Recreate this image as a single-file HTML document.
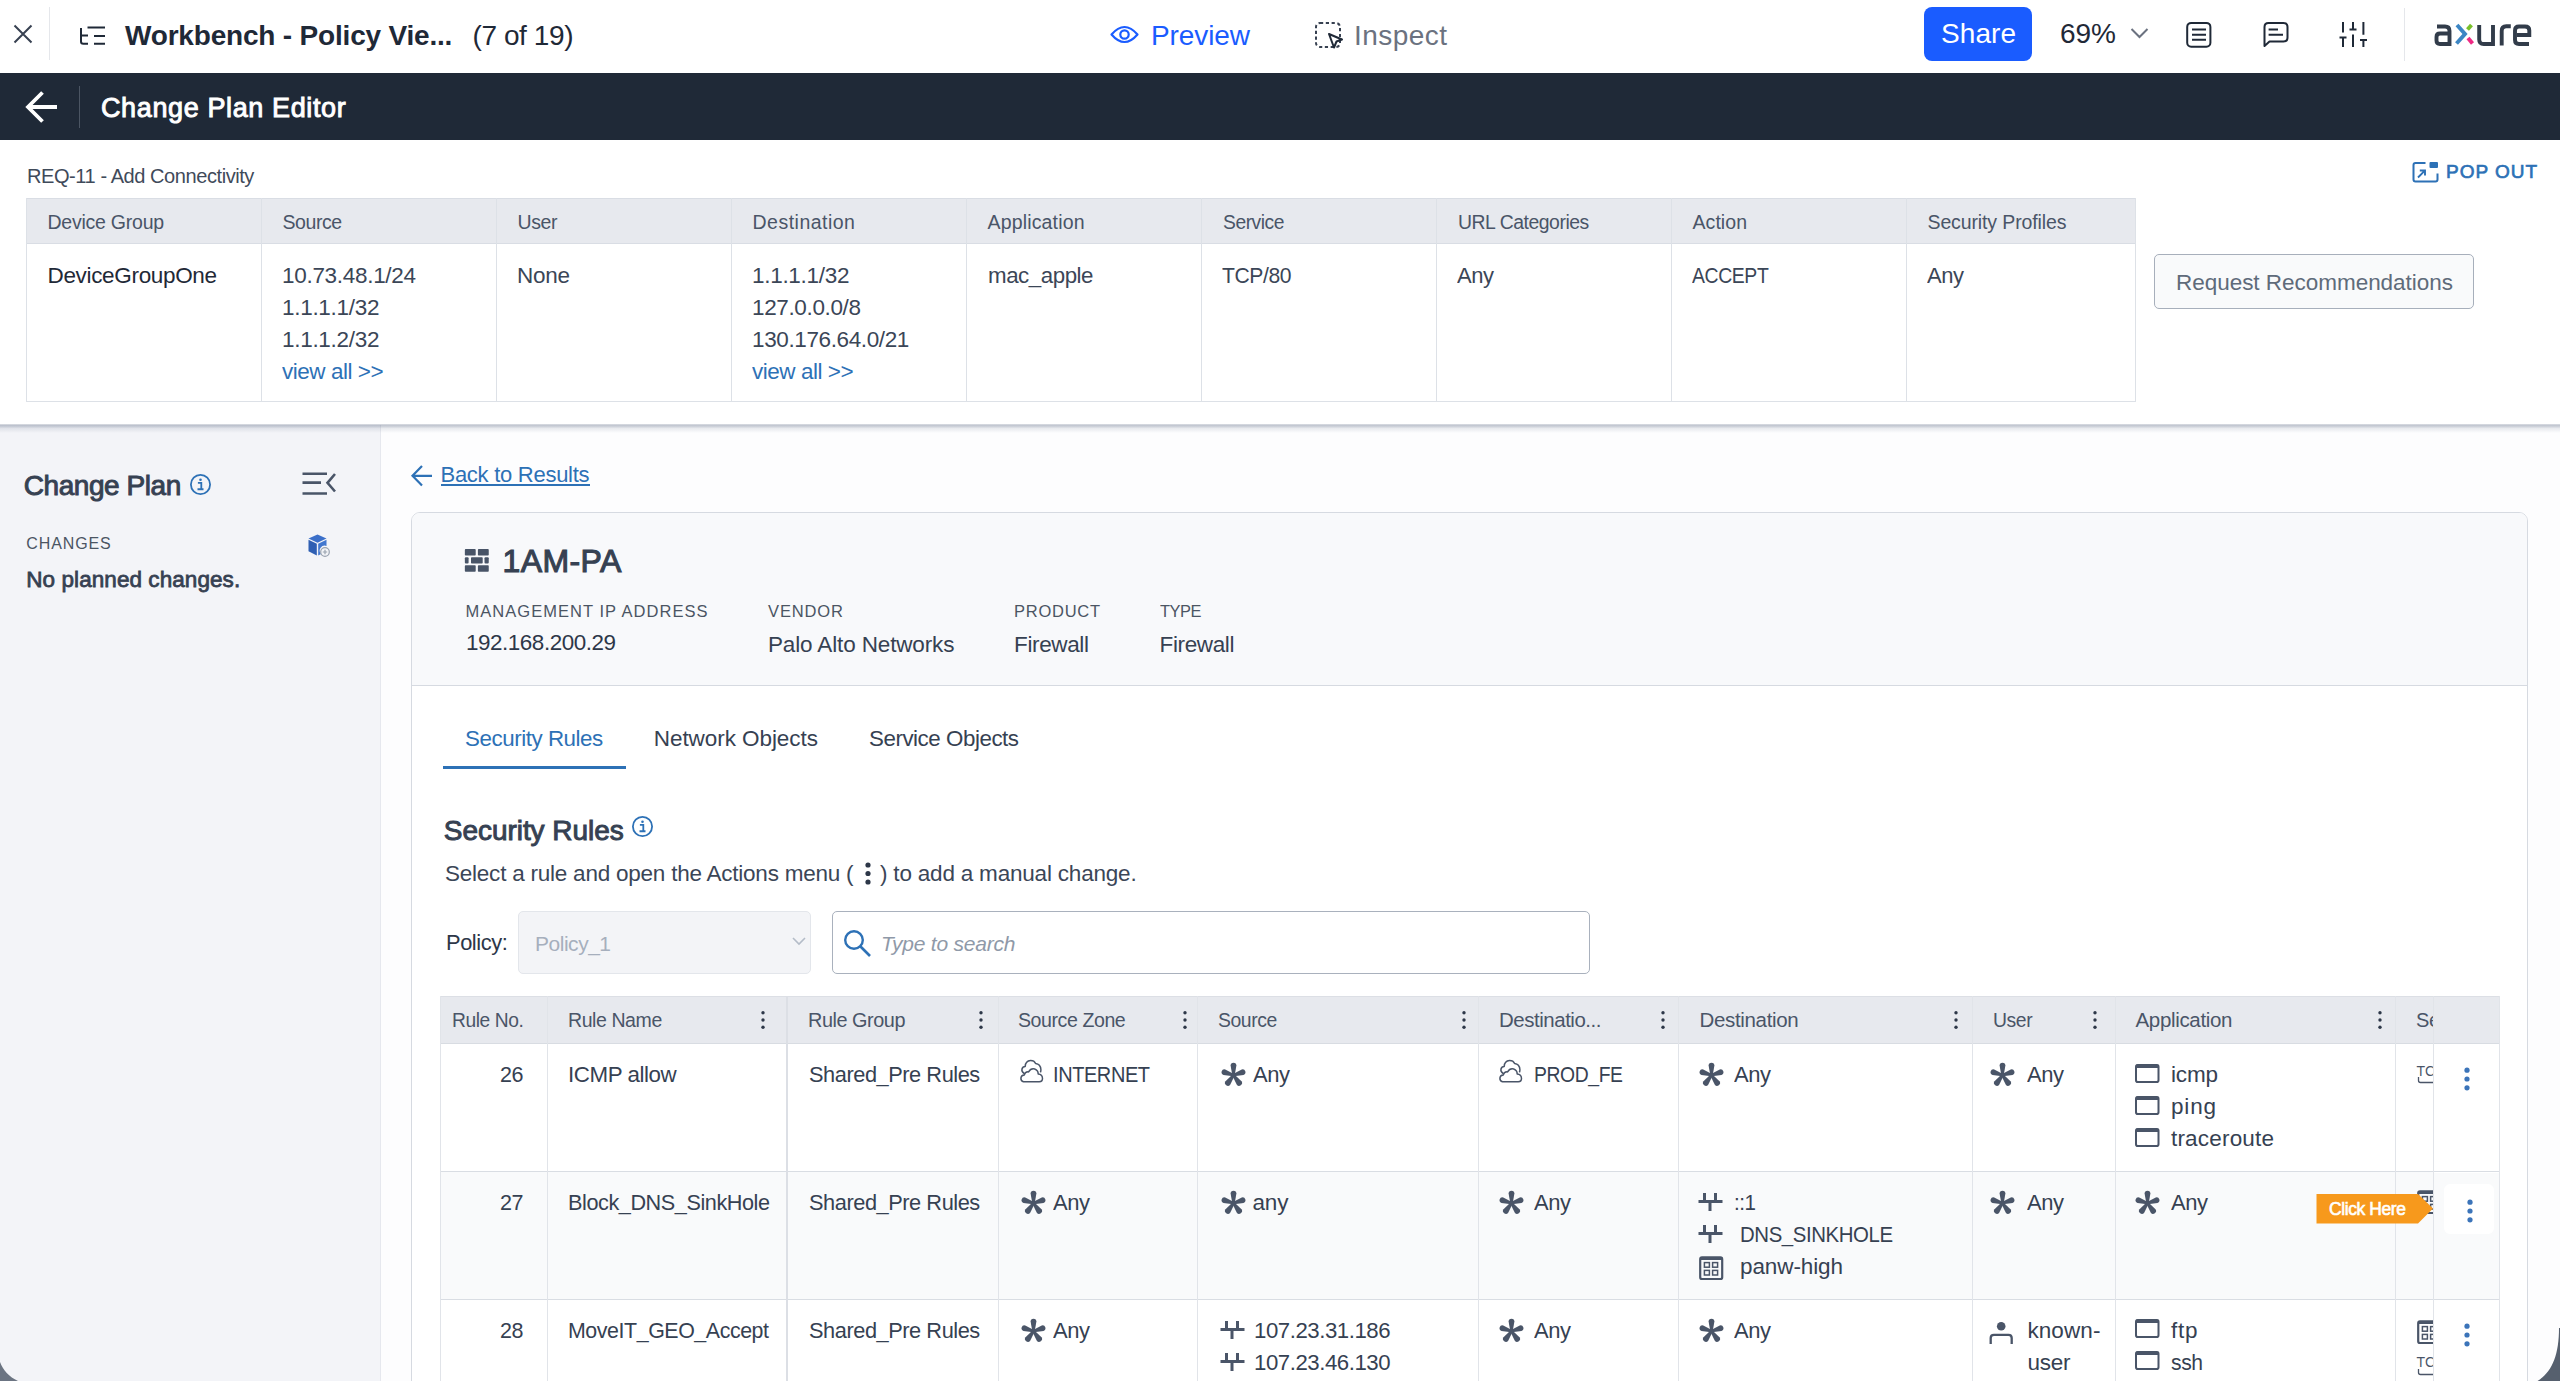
<!DOCTYPE html>
<html><head><meta charset="utf-8"><title>Change Plan Editor</title>
<style>
html,body{margin:0;padding:0;width:2560px;height:1381px;overflow:hidden;background:#fff;}
body{position:relative;font-family:"Liberation Sans", sans-serif;}
.a{position:absolute;}
.t{white-space:pre;line-height:normal;}
</style></head><body>
<div class="a" style="left:0px;top:0px;width:2560px;height:73px;background:#ffffff;"></div>
<div class="a" style="left:0px;top:73px;width:2560px;height:67px;background:#1f2937;"></div>
<div class="a" style="left:0px;top:140px;width:2560px;height:285px;background:#ffffff;"></div>
<div class="a" style="left:381px;top:425px;width:2179px;height:956px;background:#fdfdfe;"></div>
<div class="a" style="left:0px;top:425px;width:380px;height:956px;background:#f3f4f8;"></div>
<div class="a" style="left:380px;top:425px;width:1px;height:956px;background:#e6e8ee;"></div>
<div class="a" style="left:0px;top:424px;width:2560px;height:9px;background:linear-gradient(to bottom, rgba(110,122,145,0.25) 0%, rgba(110,122,145,0.42) 18%, rgba(110,122,145,0.14) 50%, rgba(110,122,145,0) 100%);"></div>
<svg class="a" style="left:10px;top:21px;" width="26" height="26" viewBox="0 0 26 26"><path d="M4.5 4.5 L21.5 21.5 M21.5 4.5 L4.5 21.5" stroke="#374151" stroke-width="2" fill="none"/></svg>
<div class="a" style="left:49px;top:7px;width:1px;height:53px;background:#e5e7eb;"></div>
<svg class="a" style="left:78px;top:24px;" width="30" height="24" viewBox="0 0 30 24"><path d="M3 4 V17.5 Q3 19.8 5.3 19.8 H10 M3 11.6 H10 M9.5 3.5 H27 M16 12 H27 M16 19.8 H27" stroke="#1f2937" stroke-width="2" fill="none"/></svg>
<div class="a t" style="left:125px;top:20px;font-size:28.00px;color:#1f2937;font-weight:700;letter-spacing:-0.19px;">Workbench - Policy Vie...</div>
<div class="a t" style="left:472.5px;top:20px;font-size:28.00px;color:#1f2937;letter-spacing:-0.41px;">(7 of 19)</div>
<svg class="a" style="left:1108px;top:21px;" width="34" height="27" viewBox="0 0 34 27"><path d="M3.5 13.5 Q16.5 -1.5 29.5 13.5 Q16.5 28.5 3.5 13.5 Z" stroke="#1a5cff" stroke-width="2.2" fill="none" stroke-linejoin="round"/><circle cx="16.5" cy="13.5" r="4.2" stroke="#1a5cff" stroke-width="2.2" fill="none"/></svg>
<div class="a t" style="left:1151px;top:20px;font-size:28.00px;color:#1a5cff;letter-spacing:-0.10px;">Preview</div>
<svg class="a" style="left:1312px;top:19px;" width="34" height="32" viewBox="0 0 34 32"><rect x="4" y="4" width="24" height="24" rx="4" stroke="#374151" stroke-width="2" fill="none" stroke-dasharray="3.2 2.6"/><path d="M17 15 L30 20.5 L24.5 22.5 L22 28.5 Z" fill="#ffffff" stroke="#1f2937" stroke-width="2" stroke-linejoin="round"/></svg>
<div class="a t" style="left:1354px;top:20px;font-size:28.00px;color:#6b7280;letter-spacing:0.45px;">Inspect</div>
<div class="a" style="left:1924px;top:7px;width:108px;height:54px;background:#1a5cff;border-radius:8px;"></div>
<div class="a t" style="left:1941px;top:18px;font-size:28.00px;color:#ffffff;letter-spacing:0.07px;">Share</div>
<div class="a t" style="left:2060px;top:18px;font-size:28.00px;color:#1f2937;letter-spacing:-0.02px;">69%</div>
<svg class="a" style="left:2128px;top:25px;" width="24" height="16" viewBox="0 0 24 16"><path d="M3.5 4 L11.5 12 L19.5 4" stroke="#6b7280" stroke-width="2" fill="none"/></svg>
<svg class="a" style="left:2184px;top:20px;" width="30" height="30" viewBox="0 0 30 30"><rect x="3.2" y="2.9" width="23.2" height="23.8" rx="4" stroke="#1f2937" stroke-width="2" fill="none"/><path d="M8 9.5 H22 M8 14.7 H22 M8 19.8 H22" stroke="#1f2937" stroke-width="1.9"/></svg>
<svg class="a" style="left:2260px;top:20px;" width="32" height="30" viewBox="0 0 32 30"><path d="M4.5 26 V7 Q4.5 3 8.5 3 H23.5 Q27.5 3 27.5 7 V17.5 Q27.5 21.5 23.5 21.5 H9.5 Z" stroke="#1f2937" stroke-width="2" fill="none" stroke-linejoin="round"/><path d="M8.6 9.5 H18 M8.6 14.7 H23" stroke="#1f2937" stroke-width="1.9"/></svg>
<svg class="a" style="left:2336px;top:20px;" width="34" height="30" viewBox="0 0 34 30"><path d="M7 2 V12.5 M7 17.4 V27 M3.5 17.4 H10.5 M17 2 V9.5 M13.5 9.5 H20.5 M17 14.6 V27 M27.4 2 V14.8 M27.4 20 V27 M24 20 H31" stroke="#1f2937" stroke-width="2" fill="none"/></svg>
<div class="a" style="left:2404px;top:8px;width:1px;height:53px;background:#e5e7eb;"></div>
<svg class="a" style="left:2420px;top:10px;" width="130" height="50" viewBox="0 0 130 50"><g fill="none" stroke-width="3.9" stroke-linecap="butt">
<path d="M17 16.5 H25 Q29.5 16.5 29.5 21 V34 H20 Q16.5 34 16.5 30.5 V27 Q16.5 23.5 20 23.5 H29.5" stroke="#323c4a"/>
<path d="M37 15 L45 24 L36.5 33.5" stroke="#3c86c4"/>
<path d="M51.5 15 L47.5 19.5" stroke="#79c02a"/>
<path d="M48 28 L52.5 33.5" stroke="#ee2a84"/>
<path d="M59.2 15 V29.5 Q59.2 34 63.7 34 H73 V15" stroke="#323c4a"/>
<path d="M81.7 35.5 V21 Q81.7 16.3 86.3 16.3 H90.8" stroke="#323c4a"/>
<path d="M109 34 H99 Q95 34 95 30 V20.5 Q95 16.5 99 16.5 H105 Q109.3 16.5 109.3 20.5 V25 H97" stroke="#323c4a"/>
</g></svg>
<svg class="a" style="left:22px;top:88px;" width="40" height="38" viewBox="0 0 40 38"><path d="M35 19 H6.5 M20.5 4.5 L6 19 L20.5 33.5" stroke="#ffffff" stroke-width="3.8" fill="none"/></svg>
<div class="a" style="left:79px;top:86px;width:1px;height:42px;background:#4b5563;"></div>
<div class="a t" style="left:101px;top:93px;font-size:27.00px;color:#ffffff;-webkit-text-stroke:0.92px #ffffff;letter-spacing:0.62px;">Change Plan Editor</div>
<div class="a t" style="left:26.5px;top:164px;font-size:20.50px;color:#3f4a5a;letter-spacing:-0.45px;transform:scaleX(0.9774);transform-origin:0 0;">REQ-11 - Add Connectivity</div>
<svg class="a" style="left:2408px;top:158px;" width="34" height="28" viewBox="0 0 34 28"><path d="M17.5 5 H7.5 Q5.5 5 5.5 7 V21.5 Q5.5 23.5 7.5 23.5 H27.5 Q29.5 23.5 29.5 21.5 V15.5" stroke="#2d71b6" stroke-width="2" fill="none"/><rect x="21.5" y="4" width="8.5" height="6" rx="1" fill="#2d71b6"/><path d="M10 19.5 L16.8 12.7 M11.8 12.5 H17 V17.5" stroke="#2d71b6" stroke-width="1.9" fill="none"/></svg>
<div class="a t" style="left:2446px;top:161px;font-size:19.00px;color:#2d71b6;-webkit-text-stroke:0.65px #2d71b6;letter-spacing:0.98px;">POP OUT</div>
<div class="a" style="left:26px;top:198px;width:2109px;height:45px;background:#e7e9ee;"></div>
<div class="a" style="left:26px;top:198px;width:2109px;height:1px;background:#d9dde4;"></div>
<div class="a" style="left:26px;top:243px;width:2109px;height:1px;background:#d9dde4;"></div>
<div class="a" style="left:26px;top:401px;width:2109px;height:1px;background:#dde1e7;"></div>
<div class="a" style="left:26px;top:198px;width:1px;height:204px;background:#dde1e7;"></div>
<div class="a" style="left:261px;top:198px;width:1px;height:204px;background:#dde1e7;"></div>
<div class="a" style="left:496px;top:198px;width:1px;height:204px;background:#dde1e7;"></div>
<div class="a" style="left:731px;top:198px;width:1px;height:204px;background:#dde1e7;"></div>
<div class="a" style="left:966px;top:198px;width:1px;height:204px;background:#dde1e7;"></div>
<div class="a" style="left:1201px;top:198px;width:1px;height:204px;background:#dde1e7;"></div>
<div class="a" style="left:1436px;top:198px;width:1px;height:204px;background:#dde1e7;"></div>
<div class="a" style="left:1671px;top:198px;width:1px;height:204px;background:#dde1e7;"></div>
<div class="a" style="left:1906px;top:198px;width:1px;height:204px;background:#dde1e7;"></div>
<div class="a" style="left:2135px;top:198px;width:1px;height:204px;background:#dde1e7;"></div>
<div class="a t" style="left:47.5px;top:210.5px;font-size:19.50px;color:#4a5568;letter-spacing:-0.24px;">Device Group</div>
<div class="a t" style="left:282.5px;top:210.5px;font-size:19.50px;color:#4a5568;letter-spacing:-0.44px;">Source</div>
<div class="a t" style="left:517.5px;top:210.5px;font-size:19.50px;color:#4a5568;letter-spacing:-0.39px;">User</div>
<div class="a t" style="left:752.5px;top:210.5px;font-size:19.50px;color:#4a5568;letter-spacing:0.49px;">Destination</div>
<div class="a t" style="left:987.5px;top:210.5px;font-size:19.50px;color:#4a5568;letter-spacing:0.16px;">Application</div>
<div class="a t" style="left:1222.5px;top:210.5px;font-size:19.50px;color:#4a5568;letter-spacing:-0.45px;transform:scaleX(0.9868);transform-origin:0 0;">Service</div>
<div class="a t" style="left:1457.5px;top:210.5px;font-size:19.50px;color:#4a5568;letter-spacing:-0.45px;transform:scaleX(0.9934);transform-origin:0 0;">URL Categories</div>
<div class="a t" style="left:1692.5px;top:210.5px;font-size:19.50px;color:#4a5568;letter-spacing:0.06px;">Action</div>
<div class="a t" style="left:1927.5px;top:210.5px;font-size:19.50px;color:#4a5568;letter-spacing:-0.12px;">Security Profiles</div>
<div class="a t" style="left:47.5px;top:263px;font-size:22.50px;color:#1f2937;letter-spacing:-0.33px;">DeviceGroupOne</div>
<div class="a t" style="left:282px;top:263px;font-size:22.50px;color:#3b4657;letter-spacing:-0.30px;">10.73.48.1/24</div>
<div class="a t" style="left:282px;top:295px;font-size:22.50px;color:#3b4657;letter-spacing:-0.29px;">1.1.1.1/32</div>
<div class="a t" style="left:282px;top:327px;font-size:22.50px;color:#3b4657;letter-spacing:-0.29px;">1.1.1.2/32</div>
<div class="a t" style="left:282px;top:359px;font-size:22.50px;color:#2d71b6;letter-spacing:-0.45px;transform:scaleX(0.9980);transform-origin:0 0;">view all &gt;&gt;</div>
<div class="a t" style="left:517px;top:263px;font-size:22.50px;color:#3b4657;letter-spacing:-0.26px;">None</div>
<div class="a t" style="left:752px;top:263px;font-size:22.50px;color:#3b4657;letter-spacing:-0.29px;">1.1.1.1/32</div>
<div class="a t" style="left:752px;top:295px;font-size:22.50px;color:#3b4657;letter-spacing:-0.36px;">127.0.0.0/8</div>
<div class="a t" style="left:752px;top:327px;font-size:22.50px;color:#3b4657;letter-spacing:-0.38px;">130.176.64.0/21</div>
<div class="a t" style="left:752px;top:359px;font-size:22.50px;color:#2d71b6;letter-spacing:-0.45px;transform:scaleX(0.9980);transform-origin:0 0;">view all &gt;&gt;</div>
<div class="a t" style="left:987.5px;top:263px;font-size:22.50px;color:#3b4657;letter-spacing:-0.45px;transform:scaleX(0.9909);transform-origin:0 0;">mac_apple</div>
<div class="a t" style="left:1222px;top:263px;font-size:22.50px;color:#3b4657;letter-spacing:-0.45px;transform:scaleX(0.9388);transform-origin:0 0;">TCP/80</div>
<div class="a t" style="left:1457px;top:263px;font-size:22.50px;color:#3b4657;letter-spacing:-0.45px;transform:scaleX(0.9770);transform-origin:0 0;">Any</div>
<div class="a t" style="left:1692px;top:263px;font-size:22.50px;color:#3b4657;letter-spacing:-0.45px;transform:scaleX(0.8622);transform-origin:0 0;">ACCEPT</div>
<div class="a t" style="left:1927px;top:263px;font-size:22.50px;color:#3b4657;letter-spacing:-0.45px;transform:scaleX(0.9770);transform-origin:0 0;">Any</div>
<div class="a" style="left:2154px;top:254px;width:320px;height:55px;background:#f9fafb;border:1.5px solid #a7afbb;box-sizing:border-box;border-radius:5px;"></div>
<div class="a t" style="left:2176px;top:270px;font-size:22.50px;color:#5f6b7a;letter-spacing:-0.03px;">Request Recommendations</div>
<div class="a t" style="left:23.75px;top:470px;font-size:28.00px;color:#364152;-webkit-text-stroke:0.95px #364152;letter-spacing:-0.44px;">Change Plan</div>
<svg class="a" style="left:189px;top:473px;" width="23" height="23" viewBox="0 0 23 23"><circle cx="11.5" cy="11.5" r="9.6" stroke="#2d71b6" stroke-width="1.8" fill="none"/><circle cx="11.5" cy="6.775" r="1.3" fill="#2d71b6"/><path d="M8.9 9.924999999999999 H12.3 V16.225 M8.5 16.225 H14.5" stroke="#2d71b6" stroke-width="1.8" fill="none"/></svg>
<svg class="a" style="left:300px;top:470px;" width="40" height="28" viewBox="0 0 40 28"><path d="M2.5 3.8 H27 M2.5 12.6 H21 M2.5 23.5 H27 M35 4 L27.5 12.8 L35 21.5" stroke="#4a5568" stroke-width="2.6" fill="none"/></svg>
<div class="a t" style="left:26.25px;top:535px;font-size:16.00px;color:#4b5563;letter-spacing:0.90px;">CHANGES</div>
<svg class="a" style="left:306px;top:533px;" width="26" height="26" viewBox="0 0 26 26"><path d="M11.5 1.5 L20.5 5.5 L11.5 9.8 L2.5 5.5 Z" fill="#3b6fc9"/>
<path d="M2.5 6.8 L10.8 10.8 V22.5 L2.5 18.3 Z" fill="#2f5fb3"/>
<path d="M12.2 10.8 L20.5 6.8 V13 A5 5 0 0 0 15 21 L12.2 22.5 Z" fill="#4277cf"/>
<circle cx="19" cy="19" r="4.3" fill="#f3f4f8" stroke="#9aa3b0" stroke-width="1.2"/>
<path d="M19 16.8 V21.2 M16.8 19 H21.2" stroke="#9aa3b0" stroke-width="1.2"/></svg>
<div class="a t" style="left:26.25px;top:567px;font-size:22.50px;color:#364152;-webkit-text-stroke:0.77px #364152;letter-spacing:0.07px;">No planned changes.</div>
<svg class="a" style="left:408px;top:462px;" width="30" height="28" viewBox="0 0 30 28"><path d="M24 13.8 H5 M14 4 L4.5 13.8 L14 23.5" stroke="#2d71b6" stroke-width="2.2" fill="none"/></svg>
<div class="a t" style="left:440.5px;top:462px;font-size:22.00px;color:#2d71b6;letter-spacing:-0.27px;">Back to Results</div>
<div class="a" style="left:440.5px;top:484px;width:149px;height:2px;background:#2d71b6;"></div>
<div class="a" style="left:411px;top:511.5px;width:2117px;height:900px;background:#ffffff;border:1px solid #d6dae1;box-sizing:border-box;border-radius:9px 9px 0 0;"></div>
<div class="a" style="left:412px;top:512.5px;width:2115px;height:172px;background:#f8f9fb;border-radius:8px 8px 0 0;"></div>
<div class="a" style="left:411px;top:684.5px;width:2117px;height:1px;background:#d6dae1;"></div>
<svg class="a" style="left:463px;top:547px;" width="28" height="27" viewBox="0 0 28 27"><g fill="#485467">
<rect x="1.85" y="2.1" width="10.85" height="6.4" rx="0.8"/><rect x="14.9" y="2.1" width="10.85" height="6.4" rx="0.8"/>
<rect x="1.85" y="10.2" width="3.75" height="6.3" rx="1"/><rect x="8" y="10.2" width="11.7" height="6.3" rx="0.8"/><rect x="21.5" y="10.2" width="4.25" height="6.3" rx="1"/>
<rect x="1.85" y="18.2" width="10.85" height="6.5" rx="0.8"/><rect x="14.9" y="18.2" width="10.85" height="6.5" rx="0.8"/>
</g></svg>
<div class="a t" style="left:502.5px;top:542.5px;font-size:32.00px;color:#364152;-webkit-text-stroke:1.09px #364152;letter-spacing:0.40px;">1AM-PA</div>
<div class="a t" style="left:465.5px;top:602px;font-size:16.50px;color:#4b5563;letter-spacing:1.04px;">MANAGEMENT IP ADDRESS</div>
<div class="a t" style="left:768px;top:602px;font-size:16.50px;color:#4b5563;letter-spacing:0.88px;">VENDOR</div>
<div class="a t" style="left:1014px;top:602px;font-size:16.50px;color:#4b5563;letter-spacing:0.74px;">PRODUCT</div>
<div class="a t" style="left:1159.5px;top:602px;font-size:16.50px;color:#4b5563;letter-spacing:-0.45px;transform:scaleX(0.9941);transform-origin:0 0;">TYPE</div>
<div class="a t" style="left:465.5px;top:630px;font-size:22.50px;color:#2d3748;letter-spacing:-0.45px;transform:scaleX(0.9963);transform-origin:0 0;">192.168.200.29</div>
<div class="a t" style="left:768px;top:632px;font-size:22.50px;color:#364152;letter-spacing:-0.14px;">Palo Alto Networks</div>
<div class="a t" style="left:1014px;top:632px;font-size:22.50px;color:#364152;letter-spacing:-0.36px;">Firewall</div>
<div class="a t" style="left:1159.5px;top:632px;font-size:22.50px;color:#364152;letter-spacing:-0.36px;">Firewall</div>
<div class="a t" style="left:465px;top:726px;font-size:22.50px;color:#2d71b6;letter-spacing:-0.45px;transform:scaleX(0.9932);transform-origin:0 0;">Security Rules</div>
<div class="a t" style="left:653.75px;top:726px;font-size:22.50px;color:#364152;letter-spacing:-0.06px;">Network Objects</div>
<div class="a t" style="left:868.75px;top:726px;font-size:22.50px;color:#364152;letter-spacing:-0.45px;transform:scaleX(0.9917);transform-origin:0 0;">Service Objects</div>
<div class="a" style="left:443px;top:765.5px;width:183px;height:3.5px;background:#2d71b6;"></div>
<div class="a t" style="left:443.75px;top:815px;font-size:28.00px;color:#364152;-webkit-text-stroke:0.95px #364152;letter-spacing:-0.04px;">Security Rules</div>
<svg class="a" style="left:631px;top:815px;" width="23" height="23" viewBox="0 0 23 23"><circle cx="11.5" cy="11.5" r="9.6" stroke="#2d71b6" stroke-width="1.8" fill="none"/><circle cx="11.5" cy="6.775" r="1.3" fill="#2d71b6"/><path d="M8.9 9.924999999999999 H12.3 V16.225 M8.5 16.225 H14.5" stroke="#2d71b6" stroke-width="1.8" fill="none"/></svg>
<div class="a t" style="left:445px;top:861px;font-size:22.50px;color:#3b4657;letter-spacing:-0.23px;">Select a rule and open the Actions menu (</div>
<svg class="a" style="left:862px;top:860px;" width="12" height="28" viewBox="0 0 12 28"><circle cx="6" cy="5" r="2.6" fill="#2d3748"/><circle cx="6" cy="13.5" r="2.6" fill="#2d3748"/><circle cx="6" cy="22" r="2.6" fill="#2d3748"/></svg>
<div class="a t" style="left:880px;top:861px;font-size:22.50px;color:#3b4657;letter-spacing:-0.20px;">) to add a manual change.</div>
<div class="a t" style="left:445.75px;top:929.5px;font-size:22.00px;color:#2d3748;letter-spacing:-0.45px;transform:scaleX(0.9944);transform-origin:0 0;">Policy:</div>
<div class="a" style="left:517.5px;top:911px;width:293px;height:63px;background:#f3f4f7;border:1.5px solid #e3e6eb;box-sizing:border-box;border-radius:5px;"></div>
<div class="a t" style="left:535px;top:932px;font-size:21.00px;color:#a6afbd;letter-spacing:-0.45px;transform:scaleX(0.9970);transform-origin:0 0;">Policy_1</div>
<svg class="a" style="left:788px;top:934px;" width="22" height="16" viewBox="0 0 22 16"><path d="M5 4 L11 10 L17 4" stroke="#b4bcc8" stroke-width="1.6" fill="none"/></svg>
<div class="a" style="left:832px;top:910.5px;width:758px;height:63.5px;background:#ffffff;border:1.8px solid #a9b1bd;box-sizing:border-box;border-radius:5px;"></div>
<svg class="a" style="left:840px;top:926px;" width="36" height="36" viewBox="0 0 36 36"><circle cx="14" cy="14" r="8.8" stroke="#2d71b6" stroke-width="2.4" fill="none"/><path d="M20.5 20.5 L30 30" stroke="#2d71b6" stroke-width="2.6"/></svg>
<div class="a t" style="left:881px;top:932px;font-size:21.00px;color:#8f99a8;font-style:italic;letter-spacing:-0.22px;">Type to search</div>
<div class="a" style="left:440px;top:996px;width:2059px;height:47px;background:#e7e9ee;"></div>
<div class="a" style="left:440px;top:1171px;width:1993px;height:128px;background:#f9fafb;"></div>
<div class="a" style="left:440px;top:996px;width:2059px;height:1px;background:#dcdfe5;"></div>
<div class="a" style="left:440px;top:1043px;width:2059px;height:1px;background:#d8dce2;"></div>
<div class="a" style="left:440px;top:1171px;width:2059px;height:1px;background:#d9dde3;"></div>
<div class="a" style="left:440px;top:1299px;width:2059px;height:1px;background:#d9dde3;"></div>
<div class="a" style="left:440px;top:996px;width:1.2px;height:385px;background:#e1e4e9;"></div>
<div class="a" style="left:547px;top:996px;width:1.2px;height:385px;background:#e1e4e9;"></div>
<div class="a" style="left:997.5px;top:996px;width:1.2px;height:385px;background:#e1e4e9;"></div>
<div class="a" style="left:1197px;top:996px;width:1.2px;height:385px;background:#e1e4e9;"></div>
<div class="a" style="left:1477.5px;top:996px;width:1.2px;height:385px;background:#e1e4e9;"></div>
<div class="a" style="left:1678px;top:996px;width:1.2px;height:385px;background:#e1e4e9;"></div>
<div class="a" style="left:1972px;top:996px;width:1.2px;height:385px;background:#e1e4e9;"></div>
<div class="a" style="left:2115px;top:996px;width:1.2px;height:385px;background:#e1e4e9;"></div>
<div class="a" style="left:2395px;top:996px;width:1.2px;height:385px;background:#e1e4e9;"></div>
<div class="a" style="left:2433px;top:996px;width:1.2px;height:385px;background:#e1e4e9;"></div>
<div class="a" style="left:2499px;top:996px;width:1.2px;height:385px;background:#e1e4e9;"></div>
<div class="a" style="left:785.5px;top:996px;width:2.5px;height:385px;background:#dcdfe5;"></div>
<div class="a t" style="left:452px;top:1008px;font-size:20.50px;color:#4a5568;letter-spacing:-0.45px;transform:scaleX(0.9366);transform-origin:0 0;">Rule No.</div>
<div class="a t" style="left:568.25px;top:1008px;font-size:20.50px;color:#4a5568;letter-spacing:-0.45px;transform:scaleX(0.9526);transform-origin:0 0;">Rule Name</div>
<svg class="a" style="left:758.5px;top:1007.5px;" width="8" height="24" viewBox="0 0 8 24"><circle cx="4" cy="4.8" r="1.7" fill="#2d3748"/><circle cx="4" cy="12.0" r="1.7" fill="#2d3748"/><circle cx="4" cy="19.2" r="1.7" fill="#2d3748"/></svg>
<div class="a t" style="left:808.25px;top:1008px;font-size:20.50px;color:#4a5568;letter-spacing:-0.45px;transform:scaleX(0.9674);transform-origin:0 0;">Rule Group</div>
<svg class="a" style="left:976.5px;top:1007.5px;" width="8" height="24" viewBox="0 0 8 24"><circle cx="4" cy="4.8" r="1.7" fill="#2d3748"/><circle cx="4" cy="12.0" r="1.7" fill="#2d3748"/><circle cx="4" cy="19.2" r="1.7" fill="#2d3748"/></svg>
<div class="a t" style="left:1018px;top:1008px;font-size:20.50px;color:#4a5568;letter-spacing:-0.45px;transform:scaleX(0.9546);transform-origin:0 0;">Source Zone</div>
<svg class="a" style="left:1181px;top:1007.5px;" width="8" height="24" viewBox="0 0 8 24"><circle cx="4" cy="4.8" r="1.7" fill="#2d3748"/><circle cx="4" cy="12.0" r="1.7" fill="#2d3748"/><circle cx="4" cy="19.2" r="1.7" fill="#2d3748"/></svg>
<div class="a t" style="left:1218.25px;top:1008px;font-size:20.50px;color:#4a5568;letter-spacing:-0.45px;transform:scaleX(0.9449);transform-origin:0 0;">Source</div>
<svg class="a" style="left:1460px;top:1007.5px;" width="8" height="24" viewBox="0 0 8 24"><circle cx="4" cy="4.8" r="1.7" fill="#2d3748"/><circle cx="4" cy="12.0" r="1.7" fill="#2d3748"/><circle cx="4" cy="19.2" r="1.7" fill="#2d3748"/></svg>
<div class="a t" style="left:1498.75px;top:1008px;font-size:20.50px;color:#4a5568;letter-spacing:-0.45px;transform:scaleX(0.9966);transform-origin:0 0;">Destinatio...</div>
<svg class="a" style="left:1659px;top:1007.5px;" width="8" height="24" viewBox="0 0 8 24"><circle cx="4" cy="4.8" r="1.7" fill="#2d3748"/><circle cx="4" cy="12.0" r="1.7" fill="#2d3748"/><circle cx="4" cy="19.2" r="1.7" fill="#2d3748"/></svg>
<div class="a t" style="left:1699.4px;top:1008px;font-size:20.50px;color:#4a5568;letter-spacing:-0.32px;">Destination</div>
<svg class="a" style="left:1951.5px;top:1007.5px;" width="8" height="24" viewBox="0 0 8 24"><circle cx="4" cy="4.8" r="1.7" fill="#2d3748"/><circle cx="4" cy="12.0" r="1.7" fill="#2d3748"/><circle cx="4" cy="19.2" r="1.7" fill="#2d3748"/></svg>
<div class="a t" style="left:1993.4px;top:1008px;font-size:20.50px;color:#4a5568;letter-spacing:-0.45px;transform:scaleX(0.9444);transform-origin:0 0;">User</div>
<svg class="a" style="left:2090.5px;top:1007.5px;" width="8" height="24" viewBox="0 0 8 24"><circle cx="4" cy="4.8" r="1.7" fill="#2d3748"/><circle cx="4" cy="12.0" r="1.7" fill="#2d3748"/><circle cx="4" cy="19.2" r="1.7" fill="#2d3748"/></svg>
<div class="a t" style="left:2135.5px;top:1008px;font-size:20.50px;color:#4a5568;letter-spacing:-0.33px;">Application</div>
<svg class="a" style="left:2376px;top:1007.5px;" width="8" height="24" viewBox="0 0 8 24"><circle cx="4" cy="4.8" r="1.7" fill="#2d3748"/><circle cx="4" cy="12.0" r="1.7" fill="#2d3748"/><circle cx="4" cy="19.2" r="1.7" fill="#2d3748"/></svg>
<div class="a" style="left:2395px;top:996px;width:38px;height:47px;overflow:hidden">
<div class="a t" style="left:20.8px;top:12px;font-size:20.50px;color:#4a5568;letter-spacing:-0.45px;transform:scaleX(0.9746);transform-origin:0 0;">Se</div>
</div>
<div class="a t" style="left:500px;top:1062px;font-size:22.50px;color:#364152;letter-spacing:-0.45px;transform:scaleX(0.9562);transform-origin:0 0;">26</div>
<div class="a t" style="left:568px;top:1062px;font-size:22.50px;color:#364152;letter-spacing:-0.45px;transform:scaleX(0.9934);transform-origin:0 0;">ICMP allow</div>
<div class="a t" style="left:808.75px;top:1062px;font-size:22.50px;color:#364152;letter-spacing:-0.45px;transform:scaleX(0.9669);transform-origin:0 0;">Shared_Pre Rules</div>
<svg class="a" style="left:1020px;top:1058.5px;" width="26" height="25" viewBox="0 0 26 25"><g fill="none" stroke="#4a5568" stroke-width="1.5" stroke-linejoin="round">
<path d="M4.2 14.5 Q1.3 13 2 10 Q2.6 7.5 5.2 7.5 Q5.5 2 10.5 1.6 Q14.2 1.5 15.6 4.5 Q20.5 5 20.9 10.5 Q21 12.2 20.4 13.3"/>
<path d="M3.5 22.8 Q0.8 22.2 0.9 19 Q1.2 16.2 4.2 16 Q5.2 12.5 8.6 12.9 Q10.8 9 14.7 10 Q18.2 11.2 18.2 15.1 Q22.3 15.5 22.5 19.2 Q22.6 22.6 19.2 22.8 Z"/>
</g></svg>
<div class="a t" style="left:1053.4px;top:1062px;font-size:22.50px;color:#364152;letter-spacing:-0.45px;transform:scaleX(0.8871);transform-origin:0 0;">INTERNET</div>
<svg class="a" style="left:1220.5px;top:1062px;" width="25" height="26" viewBox="0 0 25 26"><path d="M13.70 13.20 L15.40 3.60 A2.9 2.9 0 0 0 9.60 3.60 L11.30 13.20 Z" fill="#4a5568"/><path d="M12.87 14.34 L22.53 12.99 A2.9 2.9 0 0 0 20.73 7.48 L12.13 12.06 Z" fill="#4a5568"/><path d="M11.53 13.91 L15.80 22.67 A2.9 2.9 0 0 0 20.49 19.26 L13.47 12.49 Z" fill="#4a5568"/><path d="M11.53 12.49 L4.51 19.26 A2.9 2.9 0 0 0 9.20 22.67 L13.47 13.91 Z" fill="#4a5568"/><path d="M12.87 12.06 L4.27 7.48 A2.9 2.9 0 0 0 2.47 12.99 L12.13 14.34 Z" fill="#4a5568"/><circle cx="12.5" cy="13.2" r="2" fill="#4a5568"/></svg>
<div class="a t" style="left:1252.5px;top:1062px;font-size:22.50px;color:#364152;letter-spacing:-0.45px;transform:scaleX(0.9770);transform-origin:0 0;">Any</div>
<svg class="a" style="left:1498.5px;top:1058.5px;" width="26" height="25" viewBox="0 0 26 25"><g fill="none" stroke="#4a5568" stroke-width="1.5" stroke-linejoin="round">
<path d="M4.2 14.5 Q1.3 13 2 10 Q2.6 7.5 5.2 7.5 Q5.5 2 10.5 1.6 Q14.2 1.5 15.6 4.5 Q20.5 5 20.9 10.5 Q21 12.2 20.4 13.3"/>
<path d="M3.5 22.8 Q0.8 22.2 0.9 19 Q1.2 16.2 4.2 16 Q5.2 12.5 8.6 12.9 Q10.8 9 14.7 10 Q18.2 11.2 18.2 15.1 Q22.3 15.5 22.5 19.2 Q22.6 22.6 19.2 22.8 Z"/>
</g></svg>
<div class="a t" style="left:1533.75px;top:1062px;font-size:22.50px;color:#364152;letter-spacing:-0.45px;transform:scaleX(0.8593);transform-origin:0 0;">PROD_FE</div>
<svg class="a" style="left:1699px;top:1062px;" width="25" height="26" viewBox="0 0 25 26"><path d="M13.70 13.20 L15.40 3.60 A2.9 2.9 0 0 0 9.60 3.60 L11.30 13.20 Z" fill="#4a5568"/><path d="M12.87 14.34 L22.53 12.99 A2.9 2.9 0 0 0 20.73 7.48 L12.13 12.06 Z" fill="#4a5568"/><path d="M11.53 13.91 L15.80 22.67 A2.9 2.9 0 0 0 20.49 19.26 L13.47 12.49 Z" fill="#4a5568"/><path d="M11.53 12.49 L4.51 19.26 A2.9 2.9 0 0 0 9.20 22.67 L13.47 13.91 Z" fill="#4a5568"/><path d="M12.87 12.06 L4.27 7.48 A2.9 2.9 0 0 0 2.47 12.99 L12.13 14.34 Z" fill="#4a5568"/><circle cx="12.5" cy="13.2" r="2" fill="#4a5568"/></svg>
<div class="a t" style="left:1733.75px;top:1062px;font-size:22.50px;color:#364152;letter-spacing:-0.45px;transform:scaleX(0.9770);transform-origin:0 0;">Any</div>
<svg class="a" style="left:1990px;top:1062px;" width="25" height="26" viewBox="0 0 25 26"><path d="M13.70 13.20 L15.40 3.60 A2.9 2.9 0 0 0 9.60 3.60 L11.30 13.20 Z" fill="#4a5568"/><path d="M12.87 14.34 L22.53 12.99 A2.9 2.9 0 0 0 20.73 7.48 L12.13 12.06 Z" fill="#4a5568"/><path d="M11.53 13.91 L15.80 22.67 A2.9 2.9 0 0 0 20.49 19.26 L13.47 12.49 Z" fill="#4a5568"/><path d="M11.53 12.49 L4.51 19.26 A2.9 2.9 0 0 0 9.20 22.67 L13.47 13.91 Z" fill="#4a5568"/><path d="M12.87 12.06 L4.27 7.48 A2.9 2.9 0 0 0 2.47 12.99 L12.13 14.34 Z" fill="#4a5568"/><circle cx="12.5" cy="13.2" r="2" fill="#4a5568"/></svg>
<div class="a t" style="left:2027.4px;top:1062px;font-size:22.50px;color:#364152;letter-spacing:-0.45px;transform:scaleX(0.9770);transform-origin:0 0;">Any</div>
<svg class="a" style="left:2135px;top:1063.5px;" width="25" height="19" viewBox="0 0 25 19"><rect x="1" y="1" width="22.5" height="17" rx="1.8" stroke="#4a5568" stroke-width="2" fill="none"/><rect x="1" y="0.6" width="22.5" height="3.4" fill="#4a5568"/></svg>
<div class="a t" style="left:2171px;top:1062px;font-size:22.50px;color:#364152;letter-spacing:-0.17px;">icmp</div>
<svg class="a" style="left:2135px;top:1095.5px;" width="25" height="19" viewBox="0 0 25 19"><rect x="1" y="1" width="22.5" height="17" rx="1.8" stroke="#4a5568" stroke-width="2" fill="none"/><rect x="1" y="0.6" width="22.5" height="3.4" fill="#4a5568"/></svg>
<div class="a t" style="left:2171px;top:1094px;font-size:22.50px;color:#364152;letter-spacing:0.82px;">ping</div>
<svg class="a" style="left:2135px;top:1127.5px;" width="25" height="19" viewBox="0 0 25 19"><rect x="1" y="1" width="22.5" height="17" rx="1.8" stroke="#4a5568" stroke-width="2" fill="none"/><rect x="1" y="0.6" width="22.5" height="3.4" fill="#4a5568"/></svg>
<div class="a t" style="left:2171px;top:1126px;font-size:22.50px;color:#364152;letter-spacing:0.19px;">traceroute</div>
<div class="a t" style="left:500px;top:1190px;font-size:22.50px;color:#364152;letter-spacing:-0.45px;transform:scaleX(0.9562);transform-origin:0 0;">27</div>
<div class="a t" style="left:568px;top:1190px;font-size:22.50px;color:#364152;letter-spacing:-0.45px;transform:scaleX(0.9622);transform-origin:0 0;">Block_DNS_SinkHole</div>
<div class="a t" style="left:808.75px;top:1190px;font-size:22.50px;color:#364152;letter-spacing:-0.45px;transform:scaleX(0.9669);transform-origin:0 0;">Shared_Pre Rules</div>
<svg class="a" style="left:1020.5px;top:1190px;" width="25" height="26" viewBox="0 0 25 26"><path d="M13.70 13.20 L15.40 3.60 A2.9 2.9 0 0 0 9.60 3.60 L11.30 13.20 Z" fill="#4a5568"/><path d="M12.87 14.34 L22.53 12.99 A2.9 2.9 0 0 0 20.73 7.48 L12.13 12.06 Z" fill="#4a5568"/><path d="M11.53 13.91 L15.80 22.67 A2.9 2.9 0 0 0 20.49 19.26 L13.47 12.49 Z" fill="#4a5568"/><path d="M11.53 12.49 L4.51 19.26 A2.9 2.9 0 0 0 9.20 22.67 L13.47 13.91 Z" fill="#4a5568"/><path d="M12.87 12.06 L4.27 7.48 A2.9 2.9 0 0 0 2.47 12.99 L12.13 14.34 Z" fill="#4a5568"/><circle cx="12.5" cy="13.2" r="2" fill="#4a5568"/></svg>
<div class="a t" style="left:1053.4px;top:1190px;font-size:22.50px;color:#364152;letter-spacing:-0.45px;transform:scaleX(0.9770);transform-origin:0 0;">Any</div>
<svg class="a" style="left:1220.5px;top:1190px;" width="25" height="26" viewBox="0 0 25 26"><path d="M13.70 13.20 L15.40 3.60 A2.9 2.9 0 0 0 9.60 3.60 L11.30 13.20 Z" fill="#4a5568"/><path d="M12.87 14.34 L22.53 12.99 A2.9 2.9 0 0 0 20.73 7.48 L12.13 12.06 Z" fill="#4a5568"/><path d="M11.53 13.91 L15.80 22.67 A2.9 2.9 0 0 0 20.49 19.26 L13.47 12.49 Z" fill="#4a5568"/><path d="M11.53 12.49 L4.51 19.26 A2.9 2.9 0 0 0 9.20 22.67 L13.47 13.91 Z" fill="#4a5568"/><path d="M12.87 12.06 L4.27 7.48 A2.9 2.9 0 0 0 2.47 12.99 L12.13 14.34 Z" fill="#4a5568"/><circle cx="12.5" cy="13.2" r="2" fill="#4a5568"/></svg>
<div class="a t" style="left:1252.5px;top:1190px;font-size:22.50px;color:#364152;letter-spacing:-0.14px;">any</div>
<svg class="a" style="left:1499px;top:1190px;" width="25" height="26" viewBox="0 0 25 26"><path d="M13.70 13.20 L15.40 3.60 A2.9 2.9 0 0 0 9.60 3.60 L11.30 13.20 Z" fill="#4a5568"/><path d="M12.87 14.34 L22.53 12.99 A2.9 2.9 0 0 0 20.73 7.48 L12.13 12.06 Z" fill="#4a5568"/><path d="M11.53 13.91 L15.80 22.67 A2.9 2.9 0 0 0 20.49 19.26 L13.47 12.49 Z" fill="#4a5568"/><path d="M11.53 12.49 L4.51 19.26 A2.9 2.9 0 0 0 9.20 22.67 L13.47 13.91 Z" fill="#4a5568"/><path d="M12.87 12.06 L4.27 7.48 A2.9 2.9 0 0 0 2.47 12.99 L12.13 14.34 Z" fill="#4a5568"/><circle cx="12.5" cy="13.2" r="2" fill="#4a5568"/></svg>
<div class="a t" style="left:1533.75px;top:1190px;font-size:22.50px;color:#364152;letter-spacing:-0.45px;transform:scaleX(0.9770);transform-origin:0 0;">Any</div>
<svg class="a" style="left:1698px;top:1192px;" width="25" height="20" viewBox="0 0 25 20"><path d="M0.5 9.5 H24.5 M6.5 1 V9.5 M17.5 1 V9.5 M12 9.5 V19" stroke="#4a5568" stroke-width="3" fill="none"/></svg>
<div class="a t" style="left:1733.75px;top:1190px;font-size:22.50px;color:#364152;letter-spacing:-0.45px;transform:scaleX(0.9123);transform-origin:0 0;">::1</div>
<svg class="a" style="left:1698px;top:1224px;" width="25" height="20" viewBox="0 0 25 20"><path d="M0.5 9.5 H24.5 M6.5 1 V9.5 M17.5 1 V9.5 M12 9.5 V19" stroke="#4a5568" stroke-width="3" fill="none"/></svg>
<div class="a t" style="left:1740px;top:1222px;font-size:22.50px;color:#364152;letter-spacing:-0.45px;transform:scaleX(0.9061);transform-origin:0 0;">DNS_SINKHOLE</div>
<svg class="a" style="left:1698.5px;top:1256px;" width="25" height="25" viewBox="0 0 25 25"><rect x="1.2" y="1.4" width="22" height="21.6" rx="1.8" stroke="#4a5568" stroke-width="2.2" fill="none"/><rect x="1.2" y="1" width="22" height="3" fill="#4a5568"/><g fill="none" stroke="#4a5568" stroke-width="1.5"><rect x="5.4" y="6.6" width="5" height="4.6"/><rect x="13.6" y="6.6" width="5" height="4.6"/><rect x="5.4" y="14.4" width="5" height="4.6"/><rect x="13.6" y="14.4" width="5" height="4.6"/></g></svg>
<div class="a t" style="left:1740px;top:1254px;font-size:22.50px;color:#364152;letter-spacing:-0.10px;">panw-high</div>
<svg class="a" style="left:1990px;top:1190px;" width="25" height="26" viewBox="0 0 25 26"><path d="M13.70 13.20 L15.40 3.60 A2.9 2.9 0 0 0 9.60 3.60 L11.30 13.20 Z" fill="#4a5568"/><path d="M12.87 14.34 L22.53 12.99 A2.9 2.9 0 0 0 20.73 7.48 L12.13 12.06 Z" fill="#4a5568"/><path d="M11.53 13.91 L15.80 22.67 A2.9 2.9 0 0 0 20.49 19.26 L13.47 12.49 Z" fill="#4a5568"/><path d="M11.53 12.49 L4.51 19.26 A2.9 2.9 0 0 0 9.20 22.67 L13.47 13.91 Z" fill="#4a5568"/><path d="M12.87 12.06 L4.27 7.48 A2.9 2.9 0 0 0 2.47 12.99 L12.13 14.34 Z" fill="#4a5568"/><circle cx="12.5" cy="13.2" r="2" fill="#4a5568"/></svg>
<div class="a t" style="left:2027.4px;top:1190px;font-size:22.50px;color:#364152;letter-spacing:-0.45px;transform:scaleX(0.9770);transform-origin:0 0;">Any</div>
<svg class="a" style="left:2135px;top:1190px;" width="25" height="26" viewBox="0 0 25 26"><path d="M13.70 13.20 L15.40 3.60 A2.9 2.9 0 0 0 9.60 3.60 L11.30 13.20 Z" fill="#4a5568"/><path d="M12.87 14.34 L22.53 12.99 A2.9 2.9 0 0 0 20.73 7.48 L12.13 12.06 Z" fill="#4a5568"/><path d="M11.53 13.91 L15.80 22.67 A2.9 2.9 0 0 0 20.49 19.26 L13.47 12.49 Z" fill="#4a5568"/><path d="M11.53 12.49 L4.51 19.26 A2.9 2.9 0 0 0 9.20 22.67 L13.47 13.91 Z" fill="#4a5568"/><path d="M12.87 12.06 L4.27 7.48 A2.9 2.9 0 0 0 2.47 12.99 L12.13 14.34 Z" fill="#4a5568"/><circle cx="12.5" cy="13.2" r="2" fill="#4a5568"/></svg>
<div class="a t" style="left:2171px;top:1190px;font-size:22.50px;color:#364152;letter-spacing:-0.45px;transform:scaleX(0.9770);transform-origin:0 0;">Any</div>
<div class="a t" style="left:500px;top:1317.5px;font-size:22.50px;color:#364152;letter-spacing:-0.45px;transform:scaleX(0.9562);transform-origin:0 0;">28</div>
<div class="a t" style="left:568px;top:1317.5px;font-size:22.50px;color:#364152;letter-spacing:-0.45px;transform:scaleX(0.9497);transform-origin:0 0;">MoveIT_GEO_Accept</div>
<div class="a t" style="left:808.75px;top:1317.5px;font-size:22.50px;color:#364152;letter-spacing:-0.45px;transform:scaleX(0.9669);transform-origin:0 0;">Shared_Pre Rules</div>
<svg class="a" style="left:1020.5px;top:1318px;" width="25" height="26" viewBox="0 0 25 26"><path d="M13.70 13.20 L15.40 3.60 A2.9 2.9 0 0 0 9.60 3.60 L11.30 13.20 Z" fill="#4a5568"/><path d="M12.87 14.34 L22.53 12.99 A2.9 2.9 0 0 0 20.73 7.48 L12.13 12.06 Z" fill="#4a5568"/><path d="M11.53 13.91 L15.80 22.67 A2.9 2.9 0 0 0 20.49 19.26 L13.47 12.49 Z" fill="#4a5568"/><path d="M11.53 12.49 L4.51 19.26 A2.9 2.9 0 0 0 9.20 22.67 L13.47 13.91 Z" fill="#4a5568"/><path d="M12.87 12.06 L4.27 7.48 A2.9 2.9 0 0 0 2.47 12.99 L12.13 14.34 Z" fill="#4a5568"/><circle cx="12.5" cy="13.2" r="2" fill="#4a5568"/></svg>
<div class="a t" style="left:1053.4px;top:1317.5px;font-size:22.50px;color:#364152;letter-spacing:-0.45px;transform:scaleX(0.9770);transform-origin:0 0;">Any</div>
<svg class="a" style="left:1220px;top:1320px;" width="25" height="20" viewBox="0 0 25 20"><path d="M0.5 9.5 H24.5 M6.5 1 V9.5 M17.5 1 V9.5 M12 9.5 V19" stroke="#4a5568" stroke-width="3" fill="none"/></svg>
<div class="a t" style="left:1254px;top:1317.5px;font-size:22.50px;color:#364152;letter-spacing:-0.45px;transform:scaleX(0.9864);transform-origin:0 0;">107.23.31.186</div>
<svg class="a" style="left:1220px;top:1352px;" width="25" height="20" viewBox="0 0 25 20"><path d="M0.5 9.5 H24.5 M6.5 1 V9.5 M17.5 1 V9.5 M12 9.5 V19" stroke="#4a5568" stroke-width="3" fill="none"/></svg>
<div class="a t" style="left:1254px;top:1349.5px;font-size:22.50px;color:#364152;letter-spacing:-0.45px;transform:scaleX(0.9864);transform-origin:0 0;">107.23.46.130</div>
<svg class="a" style="left:1499px;top:1318px;" width="25" height="26" viewBox="0 0 25 26"><path d="M13.70 13.20 L15.40 3.60 A2.9 2.9 0 0 0 9.60 3.60 L11.30 13.20 Z" fill="#4a5568"/><path d="M12.87 14.34 L22.53 12.99 A2.9 2.9 0 0 0 20.73 7.48 L12.13 12.06 Z" fill="#4a5568"/><path d="M11.53 13.91 L15.80 22.67 A2.9 2.9 0 0 0 20.49 19.26 L13.47 12.49 Z" fill="#4a5568"/><path d="M11.53 12.49 L4.51 19.26 A2.9 2.9 0 0 0 9.20 22.67 L13.47 13.91 Z" fill="#4a5568"/><path d="M12.87 12.06 L4.27 7.48 A2.9 2.9 0 0 0 2.47 12.99 L12.13 14.34 Z" fill="#4a5568"/><circle cx="12.5" cy="13.2" r="2" fill="#4a5568"/></svg>
<div class="a t" style="left:1533.75px;top:1317.5px;font-size:22.50px;color:#364152;letter-spacing:-0.45px;transform:scaleX(0.9770);transform-origin:0 0;">Any</div>
<svg class="a" style="left:1699px;top:1318px;" width="25" height="26" viewBox="0 0 25 26"><path d="M13.70 13.20 L15.40 3.60 A2.9 2.9 0 0 0 9.60 3.60 L11.30 13.20 Z" fill="#4a5568"/><path d="M12.87 14.34 L22.53 12.99 A2.9 2.9 0 0 0 20.73 7.48 L12.13 12.06 Z" fill="#4a5568"/><path d="M11.53 13.91 L15.80 22.67 A2.9 2.9 0 0 0 20.49 19.26 L13.47 12.49 Z" fill="#4a5568"/><path d="M11.53 12.49 L4.51 19.26 A2.9 2.9 0 0 0 9.20 22.67 L13.47 13.91 Z" fill="#4a5568"/><path d="M12.87 12.06 L4.27 7.48 A2.9 2.9 0 0 0 2.47 12.99 L12.13 14.34 Z" fill="#4a5568"/><circle cx="12.5" cy="13.2" r="2" fill="#4a5568"/></svg>
<div class="a t" style="left:1733.75px;top:1317.5px;font-size:22.50px;color:#364152;letter-spacing:-0.45px;transform:scaleX(0.9770);transform-origin:0 0;">Any</div>
<svg class="a" style="left:1989px;top:1320.5px;" width="26" height="24" viewBox="0 0 26 24"><circle cx="12.2" cy="5.2" r="4.3" fill="#4a5568"/><path d="M1.7 23 V17 Q1.7 13.8 4.9 13.8 H19.5 Q22.7 13.8 22.7 17 V23" stroke="#4a5568" stroke-width="2.3" fill="none"/></svg>
<div class="a t" style="left:2027.4px;top:1317.5px;font-size:22.50px;color:#364152;letter-spacing:0.09px;">known-</div>
<div class="a t" style="left:2027.4px;top:1349.5px;font-size:22.50px;color:#364152;letter-spacing:-0.26px;">user</div>
<svg class="a" style="left:2135px;top:1319px;" width="25" height="19" viewBox="0 0 25 19"><rect x="1" y="1" width="22.5" height="17" rx="1.8" stroke="#4a5568" stroke-width="2" fill="none"/><rect x="1" y="0.6" width="22.5" height="3.4" fill="#4a5568"/></svg>
<div class="a t" style="left:2171px;top:1317.5px;font-size:22.50px;color:#364152;letter-spacing:0.69px;">ftp</div>
<svg class="a" style="left:2135px;top:1351px;" width="25" height="19" viewBox="0 0 25 19"><rect x="1" y="1" width="22.5" height="17" rx="1.8" stroke="#4a5568" stroke-width="2" fill="none"/><rect x="1" y="0.6" width="22.5" height="3.4" fill="#4a5568"/></svg>
<div class="a t" style="left:2171px;top:1349.5px;font-size:22.50px;color:#364152;letter-spacing:-0.45px;transform:scaleX(0.9380);transform-origin:0 0;">ssh</div>
<div class="a" style="left:2395px;top:1043px;width:38px;height:338px;overflow:hidden">
<div class="a t" style="left:21.5px;top:19.5px;font-size:14.00px;color:#4a5568;">TC</div>
<svg class="a" style="left:21.5px;top:33px;" width="20" height="10" viewBox="0 0 20 10"><path d="M1.5 1 V4.5 Q1.5 6.5 3.5 6.5 H20" stroke="#4a5568" stroke-width="1.3" fill="none"/></svg>
<svg class="a" style="left:21.5px;top:147px;" width="25" height="25" viewBox="0 0 25 25"><rect x="1.2" y="1.4" width="22" height="21.6" rx="1.8" stroke="#4a5568" stroke-width="2.2" fill="none"/><rect x="1.2" y="1" width="22" height="3" fill="#4a5568"/><g fill="none" stroke="#4a5568" stroke-width="1.5"><rect x="5.4" y="6.6" width="5" height="4.6"/><rect x="13.6" y="6.6" width="5" height="4.6"/><rect x="5.4" y="14.4" width="5" height="4.6"/><rect x="13.6" y="14.4" width="5" height="4.6"/></g></svg>
<svg class="a" style="left:21.5px;top:277px;" width="25" height="25" viewBox="0 0 25 25"><rect x="1.2" y="1.4" width="22" height="21.6" rx="1.8" stroke="#4a5568" stroke-width="2.2" fill="none"/><rect x="1.2" y="1" width="22" height="3" fill="#4a5568"/><g fill="none" stroke="#4a5568" stroke-width="1.5"><rect x="5.4" y="6.6" width="5" height="4.6"/><rect x="13.6" y="6.6" width="5" height="4.6"/><rect x="5.4" y="14.4" width="5" height="4.6"/><rect x="13.6" y="14.4" width="5" height="4.6"/></g></svg>
<div class="a t" style="left:21.5px;top:311px;font-size:14.00px;color:#4a5568;">TC</div>
<svg class="a" style="left:21.5px;top:325px;" width="20" height="10" viewBox="0 0 20 10"><path d="M1.5 1 V4.5 Q1.5 6.5 3.5 6.5 H20" stroke="#4a5568" stroke-width="1.3" fill="none"/></svg>
</div>
<div class="a" style="left:2434px;top:1044.5px;width:65px;height:126.5px;background:#ffffff;"></div>
<div class="a" style="left:2434px;top:1172.5px;width:65px;height:126.5px;background:#f9fafb;"></div>
<div class="a" style="left:2434px;top:1300.5px;width:65px;height:81px;background:#ffffff;"></div>
<svg class="a" style="left:2463px;top:1066.5px;" width="8" height="24" viewBox="0 0 8 24"><circle cx="4" cy="3.1999999999999993" r="2.6" fill="#3b74b9"/><circle cx="4" cy="12.0" r="2.6" fill="#3b74b9"/><circle cx="4" cy="20.8" r="2.6" fill="#3b74b9"/></svg>
<div class="a" style="left:2444px;top:1184px;width:50px;height:50px;background:#ffffff;border-radius:6px;"></div>
<svg class="a" style="left:2465.5px;top:1198.5px;" width="8" height="24" viewBox="0 0 8 24"><circle cx="4" cy="3.1999999999999993" r="2.6" fill="#3b74b9"/><circle cx="4" cy="12.0" r="2.6" fill="#3b74b9"/><circle cx="4" cy="20.8" r="2.6" fill="#3b74b9"/></svg>
<svg class="a" style="left:2463px;top:1323px;" width="8" height="24" viewBox="0 0 8 24"><circle cx="4" cy="3.1999999999999993" r="2.6" fill="#3b74b9"/><circle cx="4" cy="12.0" r="2.6" fill="#3b74b9"/><circle cx="4" cy="20.8" r="2.6" fill="#3b74b9"/></svg>
<svg class="a" style="left:2316px;top:1193px;" width="118" height="32" viewBox="0 0 118 32"><path d="M0.5 1 H102 L117 15.5 L102 30.5 H0.5 Z" fill="#f7991c"/></svg>
<div class="a t" style="left:2329px;top:1199px;font-size:17.50px;color:#ffffff;-webkit-text-stroke:0.60px #ffffff;letter-spacing:-0.41px;">Click Here</div>
<svg class="a" style="left:2520px;top:1320px;" width="40" height="61" viewBox="0 0 40 61"><path d="M39 8 C39 35 32 52 17.5 61 L40 61 L40 8 Z" fill="#56606e"/></svg>
<svg class="a" style="left:0px;top:1355px;" width="24" height="26" viewBox="0 0 24 26"><path d="M0 7 C3 15 9 22 18 26 L0 26 Z" fill="#6b7482"/></svg>
</body></html>
